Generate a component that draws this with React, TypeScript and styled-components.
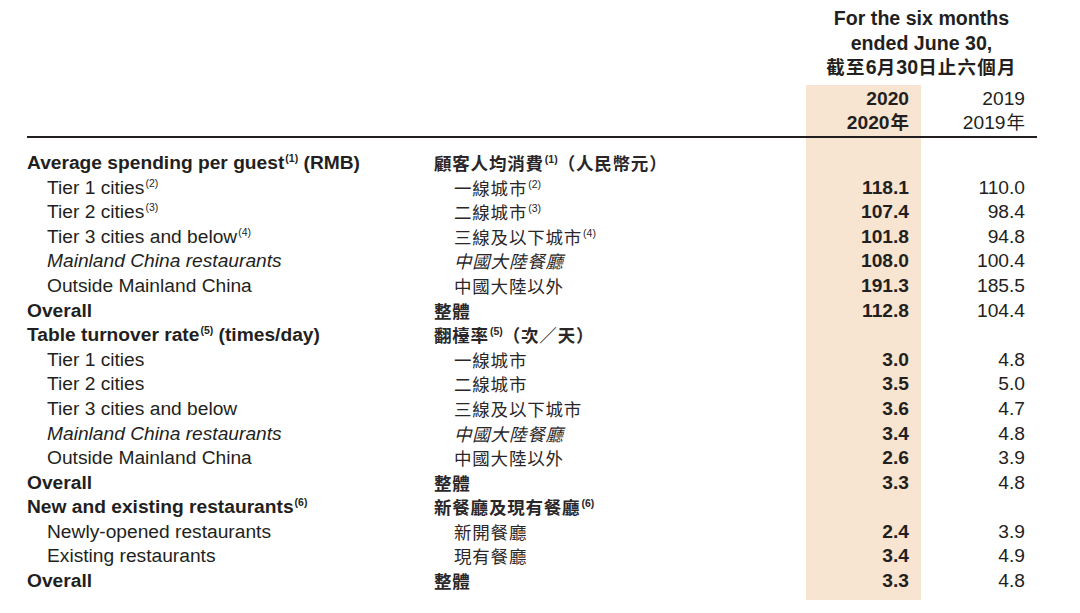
import styled, { createGlobalStyle } from 'styled-components'

const GlobalStyle = createGlobalStyle`
	body {
		margin: 0;
		background: #ffffff;
		font-family: "Liberation Sans", "Noto Sans CJK TC", sans-serif;
		color: #231f20;
	}
`

const SHADE = '#f7e4d1'

type Row = {
	en: string
	enSup?: string
	enTail?: string
	zh: string
	zhSup?: string
	zhTail?: string
	cur?: string
	prev?: string
	kind: 'head' | 'item' | 'italic'
}

const rows: Row[] = [
	{ en: 'Average spending per guest', enSup: '(1)', enTail: ' (RMB)', zh: '顧客人均消費', zhSup: '(1)', zhTail: '（人民幣元）', kind: 'head' },
	{ en: 'Tier 1 cities', enSup: '(2)', zh: '一線城市', zhSup: '(2)', cur: '118.1', prev: '110.0', kind: 'item' },
	{ en: 'Tier 2 cities', enSup: '(3)', zh: '二線城市', zhSup: '(3)', cur: '107.4', prev: '98.4', kind: 'item' },
	{ en: 'Tier 3 cities and below', enSup: '(4)', zh: '三線及以下城市', zhSup: '(4)', cur: '101.8', prev: '94.8', kind: 'item' },
	{ en: 'Mainland China restaurants', zh: '中國大陸餐廳', cur: '108.0', prev: '100.4', kind: 'italic' },
	{ en: 'Outside Mainland China', zh: '中國大陸以外', cur: '191.3', prev: '185.5', kind: 'item' },
	{ en: 'Overall', zh: '整體', cur: '112.8', prev: '104.4', kind: 'head' },
	{ en: 'Table turnover rate', enSup: '(5)', enTail: ' (times/day)', zh: '翻檯率', zhSup: '(5)', zhTail: '（次／天）', kind: 'head' },
	{ en: 'Tier 1 cities', zh: '一線城市', cur: '3.0', prev: '4.8', kind: 'item' },
	{ en: 'Tier 2 cities', zh: '二線城市', cur: '3.5', prev: '5.0', kind: 'item' },
	{ en: 'Tier 3 cities and below', zh: '三線及以下城市', cur: '3.6', prev: '4.7', kind: 'item' },
	{ en: 'Mainland China restaurants', zh: '中國大陸餐廳', cur: '3.4', prev: '4.8', kind: 'italic' },
	{ en: 'Outside Mainland China', zh: '中國大陸以外', cur: '2.6', prev: '3.9', kind: 'item' },
	{ en: 'Overall', zh: '整體', cur: '3.3', prev: '4.8', kind: 'head' },
	{ en: 'New and existing restaurants', enSup: '(6)', zh: '新餐廳及現有餐廳', zhSup: '(6)', kind: 'head' },
	{ en: 'Newly-opened restaurants', zh: '新開餐廳', cur: '2.4', prev: '3.9', kind: 'item' },
	{ en: 'Existing restaurants', zh: '現有餐廳', cur: '3.4', prev: '4.9', kind: 'item' },
	{ en: 'Overall', zh: '整體', cur: '3.3', prev: '4.8', kind: 'head' },
]

const App = () => {
	return (
		<>
			<GlobalStyle />
			<Table>
				<PeriodCell>
					For the six months
					<br />
					ended June 30,
					<br />
					<Zh>截至</Zh>6<Zh>月</Zh>30<Zh>日止六個月</Zh>
				</PeriodCell>

				<RuledCell />
				<RuledCell />
				<YearCell $current>
					2020
					<br />
					2020<Zh>年</Zh>
				</YearCell>
				<YearCell>
					2019
					<br />
					2019<Zh>年</Zh>
				</YearCell>

				<Gap />
				<Gap />
				<Gap $current />
				<Gap />

				{rows.map((r, i) => (
					<RowGroup key={i} row={r} last={i === rows.length - 1} />
				))}
			</Table>
		</>
	)
}

const RowGroup = ({ row, last }: { row: Row; last: boolean }) => (
	<>
		<Label $kind={row.kind}>
			{row.en}
			{row.enSup && <Sup>{row.enSup}</Sup>}
			{row.enTail}
		</Label>
		<ZhLabel $kind={row.kind}>
			{row.zh}
			{row.zhSup && <Sup>{row.zhSup}</Sup>}
			{row.zhTail}
		</ZhLabel>
		<Num $current $last={last}>{row.cur}</Num>
		<Num>{row.prev}</Num>
	</>
)

const Table = styled.div`
	display: grid;
	grid-template-columns: 407px 372px 115px 116px;
	margin-left: 27px;
	width: 1010px;
	font-size: 19.2px;
	line-height: 24.6px;
`

const PeriodCell = styled.div`
	grid-column: 3 / 5;
	text-align: center;
	font-weight: 700;
	font-size: 19.6px;
	padding: 6px 0 5px;
`

const Zh = styled.span`
	font-family: "Noto Sans CJK TC", sans-serif;
	font-size: 18.5px;
	line-height: 0;
	letter-spacing: 1.2px;
`

const RuledCell = styled.div`
	border-bottom: 2px solid #231f20;
`

const YearCell = styled.div<{ $current?: boolean }>`
	border-bottom: 2px solid #231f20;
	text-align: right;
	padding: 2px 12px 0 0;
	font-weight: ${(p) => (p.$current ? 700 : 400)};
	background: ${(p) => (p.$current ? SHADE : 'transparent')};

	${Zh} {
		letter-spacing: 0;
		margin-left: 1px;
	}
`

const Gap = styled.div<{ $current?: boolean }>`
	height: 13px;
	background: ${(p) => (p.$current ? SHADE : 'transparent')};
`

const Label = styled.div<{ $kind: Row['kind'] }>`
	white-space: nowrap;
	padding-left: ${(p) => (p.$kind === 'head' ? 0 : 20)}px;
	font-weight: ${(p) => (p.$kind === 'head' ? 700 : 400)};
	font-style: ${(p) => (p.$kind === 'italic' ? 'italic' : 'normal')};
`

const ZhLabel = styled(Label)`
	font-family: "Noto Sans CJK TC", sans-serif;
	font-size: 17.5px;
	letter-spacing: 0.8px;
	color: #2b2728;
`

const Sup = styled.sup`
	font-family: "Liberation Sans", sans-serif;
	font-size: 10.5px;
	line-height: 0;
	vertical-align: 7px;
	letter-spacing: 0;
	font-style: normal;
	margin-left: 1px;
`

const Num = styled.div<{ $current?: boolean; $last?: boolean }>`
	text-align: right;
	padding-right: 12px;
	padding-bottom: ${(p) => (p.$last ? 6 : 0)}px;
	font-weight: ${(p) => (p.$current ? 700 : 400)};
	background: ${(p) => (p.$current ? SHADE : 'transparent')};
`

export default App
